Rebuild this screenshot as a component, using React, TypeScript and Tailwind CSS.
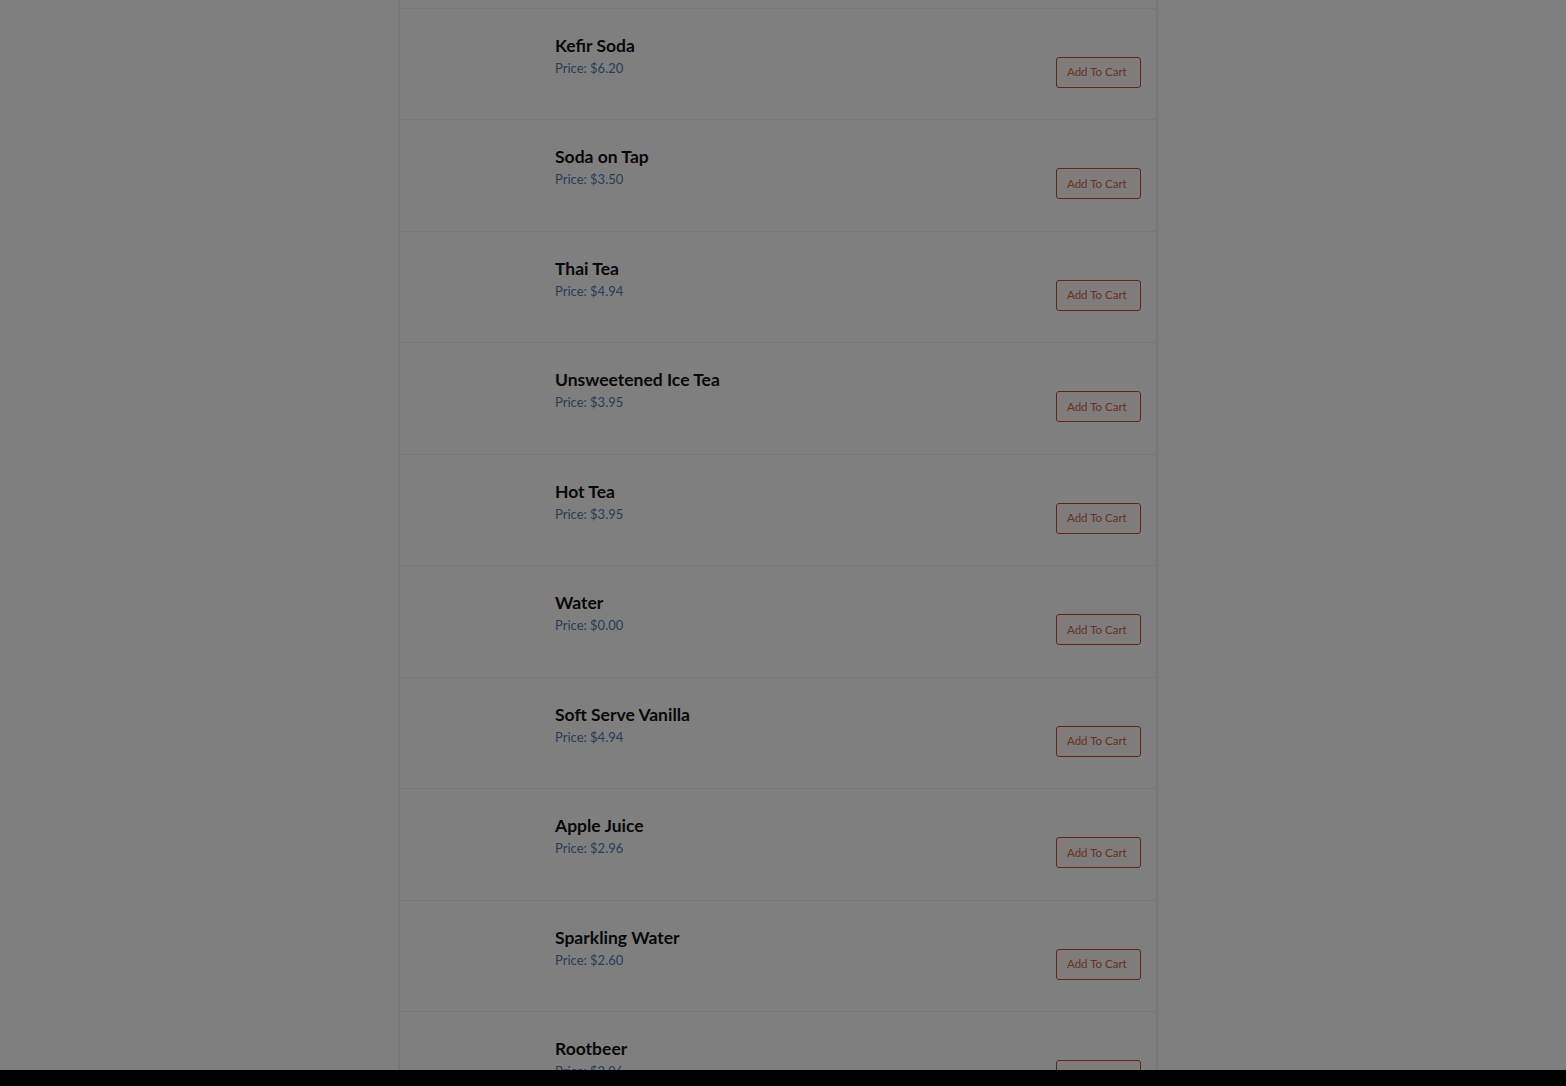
import React from 'react';

const items = [
  { name: 'Kefir Soda', price: '6.20' },
  { name: 'Soda on Tap', price: '3.50' },
  { name: 'Thai Tea', price: '4.94' },
  { name: 'Unsweetened Ice Tea', price: '3.95' },
  { name: 'Hot Tea', price: '3.95' },
  { name: 'Water', price: '0.00' },
  { name: 'Soft Serve Vanilla', price: '4.94' },
  { name: 'Apple Juice', price: '2.96' },
  { name: 'Sparkling Water', price: '2.60' },
  { name: 'Rootbeer', price: '2.96' },
];

function MenuRow({ name, price }: { name: string; price: string }) {
  return (
    <div className="h-[111.5px] border-b border-[#eeeeee] flex items-start pl-[155px] pr-[15px]">
      <div className="flex-1 pt-[25px]">
        <h3 className="text-[17.5px] leading-[24px] font-bold text-[#111111]">{name}</h3>
        <p className="text-[13px] leading-[20px] text-[#4f7ab0]">Price: ${price}</p>
      </div>
      <button className="mt-[48px] w-[85px] h-[31px] rounded-[3px] border border-[#c04a32] text-[#c9654d] text-[11.5px] text-left pl-[10px] bg-[#fff8f6]">
        Add To Cart
      </button>
    </div>
  );
}

export default function App() {
  return (
    <div
      className="h-screen overflow-hidden bg-white"
      style={{ fontFamily: 'Lato, "Noto Sans", sans-serif' }}
    >
      <div className="w-[760px] ml-[398px] bg-white border-x-2 border-[#eeeeee] -mt-[103.5px]">
        <div className="h-[112px] border-b border-[#eeeeee]" />
        {items.map((it) => (
          <MenuRow key={it.name} name={it.name} price={it.price} />
        ))}
      </div>
      <div className="fixed inset-0 bg-black/50" />
      <div className="fixed left-0 right-0 bottom-0 h-[16px] bg-black" />
    </div>
  );
}
